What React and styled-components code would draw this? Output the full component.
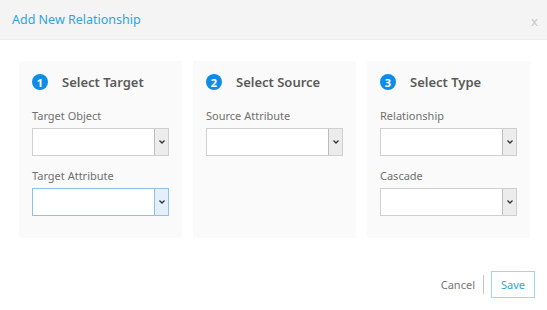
import React from 'react';
import styled, { createGlobalStyle } from 'styled-components';

const GlobalStyle = createGlobalStyle`
  body {
    margin: 0;
    background: #fff;
    font-family: 'Noto Sans', 'Open Sans', sans-serif;
  }
`;

const Modal = styled.div`
  width: 547px;
  height: 310px;
  display: flex;
  flex-direction: column;
  background: #fff;
`;

const Header = styled.div`
  height: 40px;
  box-sizing: border-box;
  display: flex;
  align-items: center;
  justify-content: space-between;
  padding: 0 9px 0 12px;
  background: #f4f4f4;
  border-bottom: 1px solid #ebebeb;
`;

const Title = styled.span`
  font-size: 12.5px;
  color: #2fa4dc;
`;

const Close = styled.span`
  font-size: 13px;
  color: #c8c8c8;
  margin-top: 2px;
`;

const Body = styled.div`
  display: grid;
  grid-template-columns: repeat(3, 163px);
  gap: 11px;
  padding: 21px 17px 0 19px;
`;

const Panel = styled.div`
  height: 177px;
  box-sizing: border-box;
  background: #fafafa;
  padding: 13px 13px 0 13px;
  display: flex;
  flex-direction: column;
`;

const PanelHead = styled.div`
  display: flex;
  align-items: center;
  height: 16px;
  margin-bottom: 19px;
`;

const Step = styled.span`
  width: 16px;
  height: 16px;
  border-radius: 50%;
  background: #0f8ce8;
  color: #fff;
  font-size: 11px;
  font-weight: 700;
  display: flex;
  align-items: center;
  justify-content: center;
  margin-right: 14px;
`;

const PanelTitle = styled.span`
  font-size: 13px;
  font-weight: 600;
  color: #5a5a5a;
`;

const Label = styled.div`
  font-size: 11px;
  color: #707070;
  line-height: 14px;
  margin-bottom: 5px;
`;

const Select = styled.div`
  height: 28px;
  box-sizing: border-box;
  display: flex;
  justify-content: flex-end;
  background: #fff;
  border: 1px solid ${(p) => (p.focused ? '#8ec0ea' : '#cfcfcf')};
  margin-bottom: 13px;
`;

const Arrow = styled.span`
  width: 13px;
  display: flex;
  align-items: center;
  justify-content: center;
  background: ${(p) => (p.focused ? '#e3effa' : '#ececec')};
  border-left: 1px solid ${(p) => (p.focused ? '#8ec0ea' : '#bdbdbd')};
`;

const Footer = styled.div`
  display: flex;
  justify-content: flex-end;
  align-items: center;
  padding: 33px 12px 0 0;
`;

const Cancel = styled.span`
  font-size: 11px;
  color: #777;
`;

const Divider = styled.span`
  width: 1px;
  height: 19px;
  background: #c4c4c4;
  margin: 0 7px 0 8px;
`;

const SaveButton = styled.button`
  width: 44px;
  height: 27px;
  box-sizing: border-box;
  background: #fff;
  border: 1px solid #a3d3ef;
  color: #2fa4dc;
  font-family: inherit;
  font-size: 11px;
  padding: 0;
`;

const Chevron = () => (
  <svg width="6" height="4" viewBox="0 0 6 4">
    <path d="M0.5 0.5 L3 3 L5.5 0.5" fill="none" stroke="#333" strokeWidth="1.3" />
  </svg>
);

const Dropdown = ({ focused }) => (
  <Select focused={focused}>
    <Arrow focused={focused}>
      <Chevron />
    </Arrow>
  </Select>
);

const steps = [
  { n: 1, title: 'Select Target', fields: [{ label: 'Target Object' }, { label: 'Target Attribute', focused: true }] },
  { n: 2, title: 'Select Source', fields: [{ label: 'Source Attribute' }] },
  { n: 3, title: 'Select Type', fields: [{ label: 'Relationship' }, { label: 'Cascade' }] }
];

export default function App() {
  return (
    <Modal>
      <GlobalStyle />
      <Header>
        <Title>Add New Relationship</Title>
        <Close>x</Close>
      </Header>
      <Body>
        {steps.map((s) => (
          <Panel key={s.n}>
            <PanelHead>
              <Step>{s.n}</Step>
              <PanelTitle>{s.title}</PanelTitle>
            </PanelHead>
            {s.fields.map((f) => (
              <div key={f.label}>
                <Label>{f.label}</Label>
                <Dropdown focused={f.focused} />
              </div>
            ))}
          </Panel>
        ))}
      </Body>
      <Footer>
        <Cancel>Cancel</Cancel>
        <Divider />
        <SaveButton>Save</SaveButton>
      </Footer>
    </Modal>
  );
}
